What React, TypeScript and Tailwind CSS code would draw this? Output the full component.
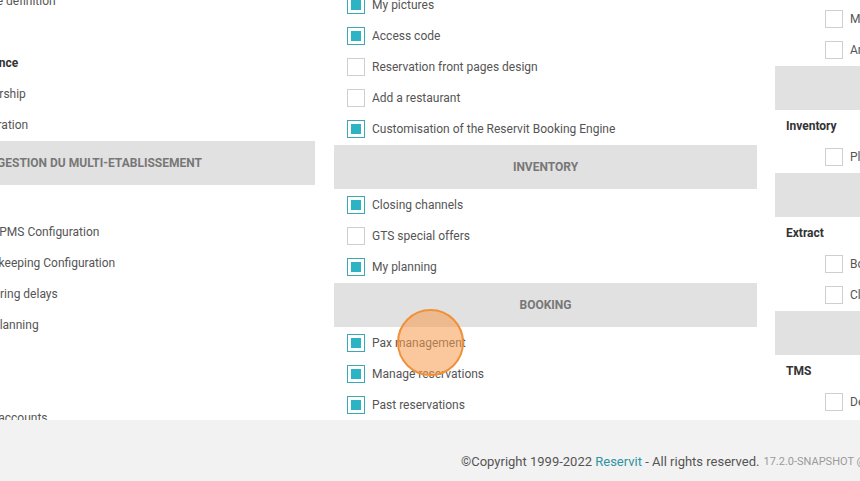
import React from 'react';

type Row =
  | { kind: 'item'; label: string; checked?: boolean }
  | { kind: 'sub'; label: string }
  | { kind: 'head'; label: string };

// left and right columns are nested lists (items indented under a sub-title)
const leftRows: Row[] = [
  { kind: 'item', label: 'Service definition' },
  { kind: 'item', label: 'Rates' },
  { kind: 'sub', label: 'Customer Experience' },
  { kind: 'item', label: 'Partnership' },
  { kind: 'item', label: 'Registration' },
  { kind: 'head', label: 'GESTION DU MULTI-ETABLISSEMENT' },
  { kind: 'item', label: 'Menu' },
  { kind: 'item', label: 'Group PMS Configuration' },
  { kind: 'item', label: 'Housekeeping Configuration' },
  { kind: 'item', label: 'Answering delays' },
  { kind: 'item', label: 'Staff planning' },
  { kind: 'item', label: 'Taxes' },
  { kind: 'item', label: 'Users' },
  { kind: 'item', label: 'Guest accounts' },
];

const middleRows: Row[] = [
  { kind: 'item', label: 'My pictures', checked: true },
  { kind: 'item', label: 'Access code', checked: true },
  { kind: 'item', label: 'Reservation front pages design' },
  { kind: 'item', label: 'Add a restaurant' },
  { kind: 'item', label: 'Customisation of the Reservit Booking Engine', checked: true },
  { kind: 'head', label: 'INVENTORY' },
  { kind: 'item', label: 'Closing channels', checked: true },
  { kind: 'item', label: 'GTS special offers' },
  { kind: 'item', label: 'My planning', checked: true },
  { kind: 'head', label: 'BOOKING' },
  { kind: 'item', label: 'Pax management', checked: true },
  { kind: 'item', label: 'Manage reservations', checked: true },
  { kind: 'item', label: 'Past reservations', checked: true },
];

const rightRows: Row[] = [
  { kind: 'item', label: 'My messages' },
  { kind: 'item', label: 'Amenities' },
  { kind: 'head', label: 'CHANNEL MANAGER' },
  { kind: 'sub', label: 'Inventory' },
  { kind: 'item', label: 'Planning' },
  { kind: 'head', label: 'STATISTICS' },
  { kind: 'sub', label: 'Extract' },
  { kind: 'item', label: 'Bookings' },
  { kind: 'item', label: 'Clients' },
  { kind: 'head', label: 'TRAVEL MANAGEMENT' },
  { kind: 'sub', label: 'TMS' },
  { kind: 'item', label: 'Delegated bookings' },
];

const Checkbox = ({ checked }: { checked?: boolean }) => (
  <div
    className={`w-[18px] h-[18px] shrink-0 border bg-white flex items-center justify-center ${
      checked ? 'border-[#3aa9b6]' : 'border-[#cfcfcf]'
    }`}
  >
    {checked && <div className="w-[10px] h-[10px] bg-[#2cb3c4]" />}
  </div>
);

const Column = ({
  rows,
  className,
  indent,
  headPad = '',
}: {
  rows: Row[];
  className: string;
  indent: string;
  headPad?: string;
}) => (
  <div className={`w-[423px] shrink-0 flex flex-col ${className}`}>
    {rows.map((r, i) => {
      if (r.kind === 'head') {
        return (
          <div
            key={i}
            className={`mt-[1px] h-[44px] bg-[#e1e1e1] flex items-center justify-center text-[12px] font-bold text-[#777] whitespace-nowrap ${headPad}`}
          >
            {r.label}
          </div>
        );
      }
      if (r.kind === 'sub') {
        return (
          <div key={i} className="h-[31px] flex items-center pl-[11px] text-[12px] font-bold text-[#333] whitespace-nowrap">
            {r.label}
          </div>
        );
      }
      return (
        <div key={i} className={`h-[31px] flex items-center gap-[7px] whitespace-nowrap ${indent}`}>
          <Checkbox checked={r.checked} />
          <span className="text-[12px] text-[#555]">{r.label}</span>
        </div>
      );
    })}
  </div>
);

export default function App() {
  return (
    <div className="relative w-[860px] h-[481px] overflow-hidden bg-white font-['Roboto',_'Liberation_Sans',_sans-serif] flex flex-col">
      <div className="h-[420px] shrink-0 overflow-hidden">
        <div className="flex items-start gap-[18px] -ml-[108px]">
          <Column rows={leftRows} indent="pl-[47px]" headPad="pr-[8px]" className="-mt-[15px] mr-[1px]" />
          <Column rows={middleRows} indent="pl-[13px]" className="-mt-[11px]" />
          <Column rows={rightRows} indent="pl-[50px]" className="mt-[3px]" />
        </div>
      </div>
      <footer className="flex-1 bg-[#f2f2f2] flex items-start pl-[461px] pt-[32px] whitespace-nowrap">
        <span className="text-[13px] text-[#555]">
          ©Copyright 1999-2022 <span className="text-[#2f93a3]">Reservit</span> - All rights reserved.
        </span>
        <span className="ml-[4px] mt-[2px] text-[11px] text-[#9a9a9a]">17.2.0-SNAPSHOT @ reservit</span>
      </footer>
      <div className="absolute left-[397px] top-[309px] w-[67px] h-[67px] rounded-full border-2 border-[#f0913a] bg-[#f79a4c]/55" />
    </div>
  );
}
